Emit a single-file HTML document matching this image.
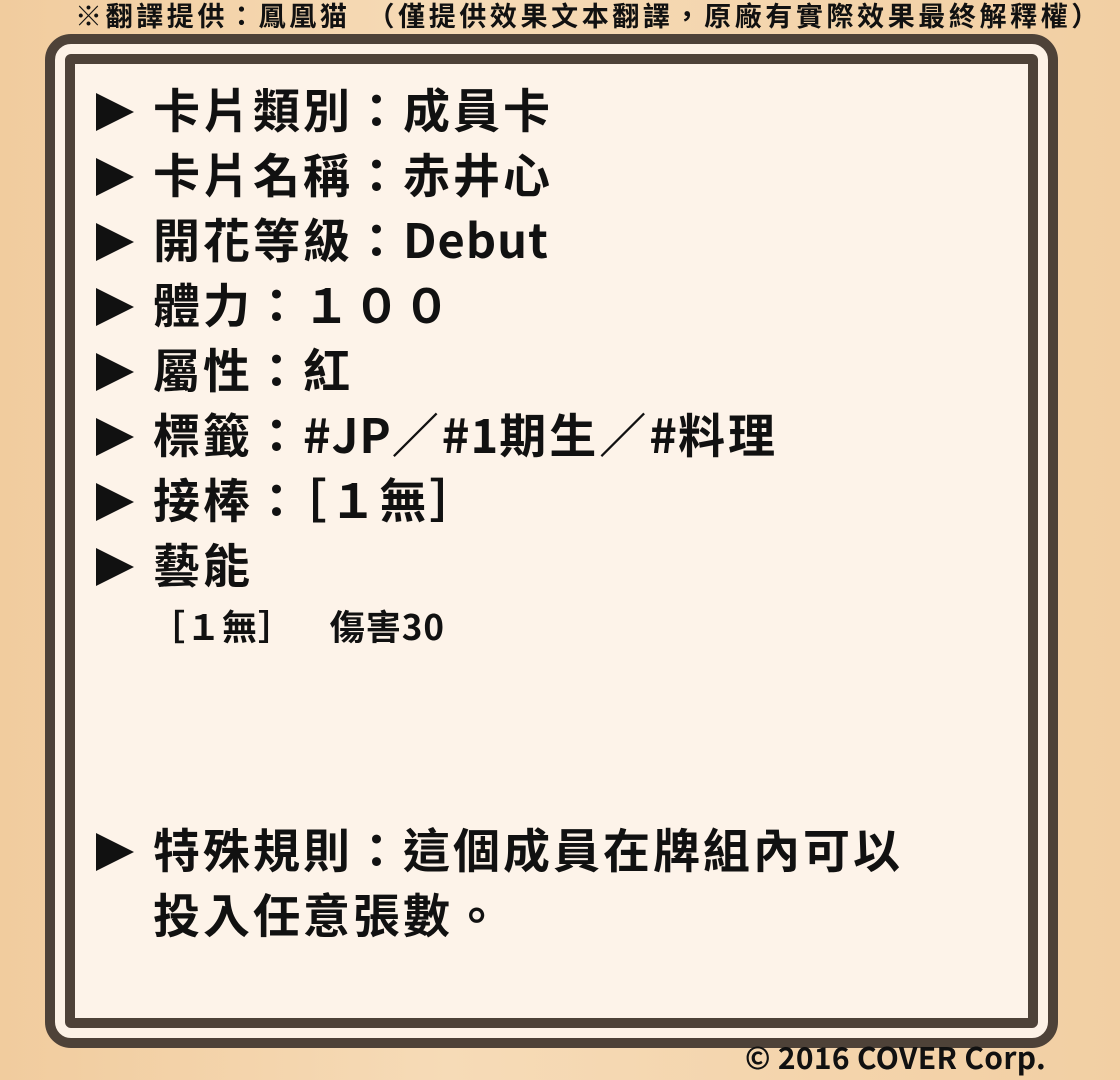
<!DOCTYPE html>
<html><head><meta charset="utf-8"><style>
html,body{margin:0;padding:0}
body{width:1120px;height:1080px;position:relative;overflow:hidden;background:linear-gradient(90deg,#f1cc9e,#f6dbb7 40%,#f4d5ad 70%,#f2cfa3);font-family:"Noto Sans CJK TC","Liberation Sans",sans-serif;color:#111}
.top{position:absolute;top:-5px;left:75px;font-size:27px;font-weight:bold;white-space:pre;letter-spacing:3.6px}
.outer{position:absolute;left:45px;top:34px;width:993px;height:994px;border:10px solid #4e4238;border-radius:26px;background:#fdf2e6}
.inner{position:absolute;left:65px;top:54px;width:953px;height:954px;border:10px solid #4e4238;border-radius:6px;background:#fdf3e9}
.l{position:absolute;left:96px;font-size:47px;font-weight:bold;line-height:1;white-space:nowrap;letter-spacing:3px}
.n{letter-spacing:1px}
.t{display:inline-block;width:0;height:0;border-top:19px solid transparent;border-bottom:19px solid transparent;border-left:38px solid #111;margin-right:19px;vertical-align:-3px}
.s{position:absolute;left:150px;top:600px;font-size:35px;font-weight:bold;white-space:pre;letter-spacing:1px}
.c{position:absolute;left:745px;top:1034px;font-size:30px;font-weight:bold;letter-spacing:0.3px}
</style></head><body>
<div class="top">※翻譯提供：鳳凰猫　（僅提供效果文本翻譯，原廠有實際效果最終解釋權）</div>
<div class="outer"></div>
<div class="inner"></div>
<div class="l" style="top:84px"><span class="t"></span>卡片類別：成員卡</div>
<div class="l" style="top:149px"><span class="t"></span>卡片名稱：赤井心</div>
<div class="l" style="top:214px"><span class="t"></span>開花等級：<span class="n">Debut</span></div>
<div class="l" style="top:279px"><span class="t"></span>體力：１００</div>
<div class="l" style="top:344px"><span class="t"></span>屬性：紅</div>
<div class="l" style="top:409px"><span class="t"></span>標籤：<span class="n">#JP</span>／<span class="n">#1</span>期生／<span class="n">#</span>料理</div>
<div class="l" style="top:474px"><span class="t"></span>接棒：［１無］</div>
<div class="l" style="top:539px"><span class="t"></span>藝能</div>
<div class="s">［１無］    傷害30</div>
<div class="l" style="top:824px"><span class="t"></span>特殊規則：這個成員在牌組內可以</div>
<div class="l" style="top:889px;left:153px">投入任意張數。</div>
<div class="c">© 2016 COVER Corp.</div>
</body></html>
